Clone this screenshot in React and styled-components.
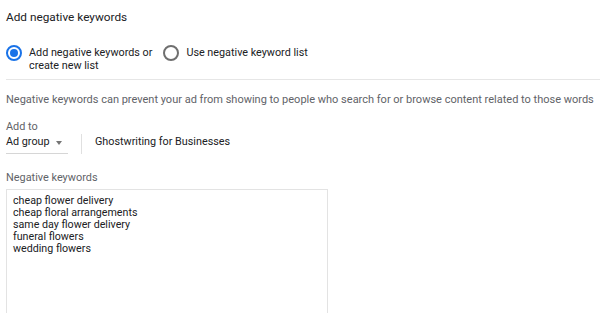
import React from 'react'
import styled, { createGlobalStyle } from 'styled-components'

const Global = createGlobalStyle`
  html, body { margin: 0; padding: 0; background: #fff; }
  body { font-family: Roboto, 'Noto Sans', sans-serif; color: #202124; overflow: hidden; }
`

const Page = styled.div`
  width: 600px;
  height: 313px;
  padding-left: 6px;
  box-sizing: border-box;
  overflow: hidden;
`

const Title = styled.h2`
  margin: 0;
  padding-top: 9px;
  font-size: 11.8px;
  font-weight: 400;
  line-height: 16px;
  color: #202124;
`

const RadioGroup = styled.div`
  display: flex;
  align-items: flex-start;
  gap: 11px;
  margin-top: 21px;
  padding-bottom: 7px;
  border-bottom: 1px solid #e6e6e6;
`

const RadioItem = styled.label`
  display: flex;
  align-items: flex-start;
  gap: 7px;
`

const Circle = styled.span`
  flex: none;
  width: 16px;
  height: 16px;
  box-sizing: border-box;
  border-radius: 50%;
  border: 2px solid ${p => (p.$checked ? '#1a73e8' : '#6f6f6f')};
  display: flex;
  align-items: center;
  justify-content: center;
  margin-top: -1px;
  &::after {
    content: '';
    width: 8px;
    height: 8px;
    border-radius: 50%;
    background: ${p => (p.$checked ? '#1a73e8' : 'transparent')};
  }
`

const RadioText = styled.span`
  font-size: 10.8px;
  line-height: 13px;
  color: #202124;
`

const Hint = styled.p`
  margin: 13px 0 0;
  font-size: 11px;
  line-height: 14px;
  color: #5f6368;
  white-space: nowrap;
`

const FieldLabel = styled.div`
  margin-top: ${p => p.$top}px;
  font-size: 10.9px;
  line-height: 14px;
  color: #5f6368;
`

const AddToRow = styled.div`
  display: flex;
  align-items: flex-end;
  height: 20px;
`

const Select = styled.div`
  display: flex;
  align-items: flex-start;
  gap: 6px;
  width: 62px;
  height: 20px;
  box-sizing: border-box;
  padding-top: 1px;
  font-size: 10.8px;
  line-height: 14px;
  color: #202124;
  border-bottom: 1px solid #d6d6d6;
`

const Caret = styled.span`
  width: 0;
  height: 0;
  margin-top: 6px;
  border-left: 3.5px solid transparent;
  border-right: 3.5px solid transparent;
  border-top: 4px solid #757575;
`

const VDivider = styled.span`
  width: 1px;
  height: 20px;
  background: #e0e0e0;
  margin: 0 13px;
`

const Value = styled.span`
  align-self: flex-start;
  padding-top: 1px;
  font-size: 10.8px;
  line-height: 14px;
  color: #202124;
`

const KeywordBox = styled.div`
  margin-top: 4px;
  width: 322px;
  height: 140px;
  box-sizing: border-box;
  border: 1px solid #e3e3e3;
  padding: 5px 6px;
  font-size: 10.7px;
  line-height: 12px;
  color: #202124;
  white-space: pre-line;
`

const keywords = [
  'cheap flower delivery',
  'cheap floral arrangements',
  'same day flower delivery',
  'funeral flowers',
  'wedding flowers',
]

export default function App() {
  return (
    <Page>
      <Global />
      <Title>Add negative keywords</Title>
      <RadioGroup>
        <RadioItem>
          <Circle $checked />
          <RadioText>Add negative keywords or<br />create new list</RadioText>
        </RadioItem>
        <RadioItem>
          <Circle />
          <RadioText>Use negative keyword list</RadioText>
        </RadioItem>
      </RadioGroup>
      <Hint>Negative keywords can prevent your ad from showing to people who search for or browse content related to those words</Hint>
      <FieldLabel $top={13}>Add to</FieldLabel>
      <AddToRow>
        <Select>Ad group <Caret /></Select>
        <VDivider />
        <Value>Ghostwriting for Businesses</Value>
      </AddToRow>
      <FieldLabel $top={17}>Negative keywords</FieldLabel>
      <KeywordBox>{keywords.join('\n')}</KeywordBox>
    </Page>
  )
}
